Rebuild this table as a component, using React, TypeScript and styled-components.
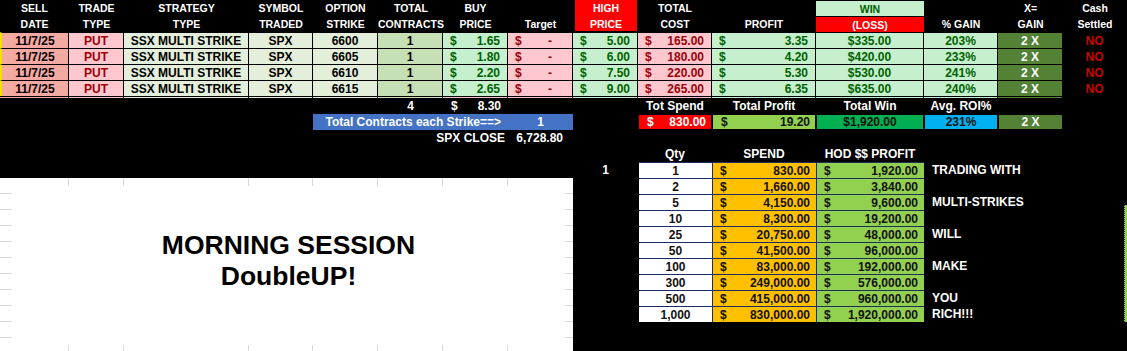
import React from 'react';
import styled, { createGlobalStyle } from 'styled-components';

const COLS = '69px 55px 125px 64px 65px 65px 65px 65px 65px 74px 104px 108px 74px 65px 64px';

const SALMON = '#F4A9A3';
const PINK = '#FFC7CE';
const DARKRED = '#9C0006';
const PALE = '#E3EFDB';
const OLIVE = '#C6DFB4';
const GREEN = '#C6EFCE';
const DKGREEN = '#006100';
const XGREEN = '#548235';
const LIME = '#92D050';
const NAVY = '#1F2D5C';

const GlobalStyle = createGlobalStyle`
  html, body { margin: 0; padding: 0; background: #000; }
  body { font-family: 'Liberation Sans', Arial, sans-serif; }
`;

const Sheet = styled.div`
  width: 1127px;
  height: 351px;
  background: #000;
  overflow: hidden;
  display: flex;
  flex-direction: column;
  font-family: 'Liberation Sans', Arial, sans-serif;
  font-weight: 700;
`;

const TradeGrid = styled.div`
  display: grid;
  grid-template-columns: ${COLS};
`;

const HeaderCol = styled.div<{ $fill?: string }>`
  display: grid;
  grid-template-rows: 16px 16px;
  height: ${(p) => (p.$fill ? '31px' : '32px')};
  margin: ${(p) => (p.$fill ? '0 1px 1px 2px' : '0')};
  background: ${(p) => p.$fill ?? 'transparent'};
`;

const HeadLine = styled.div<{ $bg?: string; $color?: string }>`
  display: flex;
  align-items: center;
  justify-content: center;
  font-size: 10.5px;
  color: ${(p) => p.$color ?? '#fff'};
  background: ${(p) => p.$bg ?? 'transparent'};
  margin: ${(p) => (p.$bg ? '1px 0 0 0' : '0')};
  white-space: nowrap;
`;

const Cell = styled.div<{ $bg: string; $color?: string; $split?: boolean; $edge?: boolean }>`
  box-sizing: border-box;
  height: 16px;
  border-top: 1px solid #000;
  border-right: 1px solid #000;
  border-left: ${(p) => (p.$edge ? '2px solid #F2E200' : '0')};
  background: ${(p) => p.$bg};
  color: ${(p) => p.$color ?? '#000'};
  display: flex;
  align-items: center;
  justify-content: ${(p) => (p.$split ? 'space-between' : 'center')};
  padding: ${(p) => (p.$split ? '0 7px 0 7px' : '0')};
  font-size: 12px;
  white-space: nowrap;
`;

const Dash = styled.span`
  margin-right: 13px;
`;

const Sliver = styled.div<{ $bg: string }>`
  height: 2px;
  box-sizing: border-box;
  border-top: 1px solid #000;
  border-right: 1px solid #000;
  background: ${(p) => p.$bg};
`;

const SummaryGrid = styled.div`
  flex: 1;
  display: grid;
  grid-template-columns: ${COLS};
  grid-template-rows: repeat(14, 16px) 1fr;
`;

type Place = { $col: string; $row: string };

const Text = styled.div<Place & { $align?: 'left' | 'center' | 'right'; $pad?: string; $color?: string }>`
  grid-column: ${(p) => p.$col};
  grid-row: ${(p) => p.$row};
  display: flex;
  align-items: center;
  justify-content: ${(p) =>
    p.$align === 'left' ? 'flex-start' : p.$align === 'right' ? 'flex-end' : 'center'};
  padding: ${(p) => p.$pad ?? '0'};
  color: ${(p) => p.$color ?? '#fff'};
  font-size: 12px;
  white-space: nowrap;
`;

const SplitText = styled(Text)`
  justify-content: space-between;
`;

const BlueBar = styled(Text)`
  background: #4472C4;
`;

const Box = styled.div<Place & { $bg: string; $color: string; $split?: boolean }>`
  grid-column: ${(p) => p.$col};
  grid-row: ${(p) => p.$row};
  box-sizing: border-box;
  border: 1px solid #000;
  background: ${(p) => p.$bg};
  color: ${(p) => p.$color};
  display: flex;
  align-items: center;
  justify-content: ${(p) => (p.$split ? 'space-between' : 'center')};
  padding: ${(p) => (p.$split ? '0 5px 0 8px' : '0')};
  font-size: 12px;
  white-space: nowrap;
`;

const TableCell = styled.div<Place & { $bg: string; $split?: boolean; $navyLeft?: boolean }>`
  grid-column: ${(p) => p.$col};
  grid-row: ${(p) => p.$row};
  box-sizing: border-box;
  border-top: 1px solid ${NAVY};
  border-left: 1px solid ${(p) => (p.$navyLeft ? NAVY : '#000')};
  background: ${(p) => p.$bg};
  color: #111;
  display: flex;
  align-items: center;
  justify-content: ${(p) => (p.$split ? 'space-between' : 'center')};
  padding: ${(p) => (p.$split ? '0 6px 0 7px' : '0')};
  font-size: 12px;
  white-space: nowrap;
`;

const gridX = [68, 123, 248, 312, 377, 442, 507];
const vLines = gridX.map(() => 'linear-gradient(#d9d9d9, #d9d9d9)').join(', ');
const vPos = gridX.map((x) => `${x}px 0`).join(', ');

const Panel = styled.div`
  grid-column: 1 / 9;
  grid-row: 6 / 16;
  display: flex;
  background-color: #fff;
  background-image: ${vLines}, repeating-linear-gradient(to bottom, transparent 0 15px, #d9d9d9 15px 16px);
  background-position: ${vPos}, 0 0;
  background-size: ${gridX.map(() => '1px 100%').join(', ')}, 100% 100%;
  background-repeat: no-repeat;
`;

const PanelInner = styled.div`
  flex: 1;
  margin: 8px 8px 6px 12px;
  background: #fff;
  display: flex;
  flex-direction: column;
  align-items: center;
  justify-content: center;
  padding-bottom: 10px;
`;

const Title = styled.div`
  font-size: 26.5px;
  line-height: 31px;
  color: #000;
  text-align: center;
  font-weight: 700;
`;

const EdgeStrip = styled.div`
  grid-column: 15;
  grid-row: 7 / 15;
  justify-self: end;
  width: 2px;
  margin-top: 11px;
  background: ${LIME};
  border-left: 1px dotted #333;
`;

const headers: { top: string; bottom: string; fill?: string; topBg?: string; topColor?: string; botBg?: string }[] = [
  { top: 'SELL', bottom: 'DATE' },
  { top: 'TRADE', bottom: 'TYPE' },
  { top: 'STRATEGY', bottom: 'TYPE' },
  { top: 'SYMBOL', bottom: 'TRADED' },
  { top: 'OPTION', bottom: 'STRIKE' },
  { top: 'TOTAL', bottom: 'CONTRACTS' },
  { top: 'BUY', bottom: 'PRICE' },
  { top: '', bottom: 'Target' },
  { top: 'HIGH', bottom: 'PRICE', fill: '#FF0000' },
  { top: 'TOTAL', bottom: 'COST' },
  { top: '', bottom: 'PROFIT' },
  { top: 'WIN', bottom: '(LOSS)', topBg: GREEN, topColor: DKGREEN, botBg: '#FF0000' },
  { top: '', bottom: '% GAIN' },
  { top: 'X=', bottom: 'GAIN' },
  { top: 'Cash', bottom: 'Settled' },
];

const trades = [
  { strike: '6600', buy: '1.65', high: '5.00', cost: '165.00', profit: '3.35', win: '$335.00', gain: '203%' },
  { strike: '6605', buy: '1.80', high: '6.00', cost: '180.00', profit: '4.20', win: '$420.00', gain: '233%' },
  { strike: '6610', buy: '2.20', high: '7.50', cost: '220.00', profit: '5.30', win: '$530.00', gain: '241%' },
  { strike: '6615', buy: '2.65', high: '9.00', cost: '265.00', profit: '6.35', win: '$635.00', gain: '240%' },
];

const sliver = [SALMON, PINK, PALE, PALE, PALE, OLIVE, PINK, PINK, GREEN, PINK, GREEN, GREEN, GREEN, XGREEN, '#000'];

const scale = [
  { qty: '1', spend: '830.00', hod: '1,920.00', label: 'TRADING WITH' },
  { qty: '2', spend: '1,660.00', hod: '3,840.00', label: '' },
  { qty: '5', spend: '4,150.00', hod: '9,600.00', label: 'MULTI-STRIKES' },
  { qty: '10', spend: '8,300.00', hod: '19,200.00', label: '' },
  { qty: '25', spend: '20,750.00', hod: '48,000.00', label: 'WILL' },
  { qty: '50', spend: '41,500.00', hod: '96,000.00', label: '' },
  { qty: '100', spend: '83,000.00', hod: '192,000.00', label: 'MAKE' },
  { qty: '300', spend: '249,000.00', hod: '576,000.00', label: '' },
  { qty: '500', spend: '415,000.00', hod: '960,000.00', label: 'YOU' },
  { qty: '1,000', spend: '830,000.00', hod: '1,920,000.00', label: 'RICH!!!' },
];

export default function App() {
  return (
    <>
      <GlobalStyle />
      <Sheet>
        <TradeGrid>
          {headers.map((h, i) => (
            <HeaderCol key={i} $fill={h.fill}>
              <HeadLine $bg={h.topBg} $color={h.topColor}>{h.top}</HeadLine>
              <HeadLine $bg={h.botBg}>{h.bottom}</HeadLine>
            </HeaderCol>
          ))}
          {trades.map((t) => (
            <React.Fragment key={t.strike}>
              <Cell $bg={SALMON} $edge>11/7/25</Cell>
              <Cell $bg={PINK} $color={DARKRED}>PUT</Cell>
              <Cell $bg={PALE}>SSX MULTI STRIKE</Cell>
              <Cell $bg={PALE}>SPX</Cell>
              <Cell $bg={PALE}>{t.strike}</Cell>
              <Cell $bg={OLIVE}>1</Cell>
              <Cell $bg={GREEN} $color={DKGREEN} $split>
                <span>$</span>
                <span>{t.buy}</span>
              </Cell>
              <Cell $bg={PINK} $color={DARKRED} $split>
                <span>$</span>
                <Dash>-</Dash>
              </Cell>
              <Cell $bg={GREEN} $color={DKGREEN} $split>
                <span>$</span>
                <span>{t.high}</span>
              </Cell>
              <Cell $bg={PINK} $color={DARKRED} $split>
                <span>$</span>
                <span>{t.cost}</span>
              </Cell>
              <Cell $bg={GREEN} $color={DKGREEN} $split>
                <span>$</span>
                <span>{t.profit}</span>
              </Cell>
              <Cell $bg={GREEN} $color={DKGREEN}>{t.win}</Cell>
              <Cell $bg={GREEN} $color={DKGREEN}>{t.gain}</Cell>
              <Cell $bg={XGREEN} $color="#fff">2 X</Cell>
              <Cell $bg="#000" $color="#D00000">NO</Cell>
            </React.Fragment>
          ))}
          {sliver.map((c, i) => (
            <Sliver key={i} $bg={c} />
          ))}
        </TradeGrid>

        <SummaryGrid>
          <Text $col="6" $row="1">4</Text>
          <SplitText $col="7" $row="1" $pad="0 7px 0 8px">
            <span>$</span>
            <span>8.30</span>
          </SplitText>
          <Text $col="10" $row="1">Tot Spend</Text>
          <Text $col="11" $row="1">Total Profit</Text>
          <Text $col="12" $row="1">Total Win</Text>
          <Text $col="13" $row="1">Avg. ROI%</Text>

          <BlueBar $col="5 / 8" $row="2" $align="right" $pad="0 7px 0 0">Total Contracts each Strike==&gt;</BlueBar>
          <BlueBar $col="8" $row="2">1</BlueBar>
          <Box $col="10" $row="2" $bg="#FF0000" $color="#fff" $split>
            <span>$</span>
            <span>830.00</span>
          </Box>
          <Box $col="11" $row="2" $bg={LIME} $color="#111" $split>
            <span>$</span>
            <span>19.20</span>
          </Box>
          <Box $col="12" $row="2" $bg="#00B050" $color="#111">$1,920.00</Box>
          <Box $col="13" $row="2" $bg="#00B0F0" $color="#111">231%</Box>
          <Box $col="14" $row="2" $bg={XGREEN} $color="#fff">2 X</Box>

          <Text $col="6 / 8" $row="3" $align="right" $pad="0 3px 0 0">SPX CLOSE</Text>
          <Text $col="8" $row="3" $align="right" $pad="0 10px 0 0">6,728.80</Text>

          <Text $col="10" $row="4">Qty</Text>
          <Text $col="11" $row="4">SPEND</Text>
          <Text $col="12" $row="4">HOD $$ PROFIT</Text>

          <Text $col="9" $row="5">1</Text>
          {scale.map((s, i) => {
            const row = String(5 + i);
            return (
              <React.Fragment key={s.qty}>
                <TableCell $col="10" $row={row} $bg="#fff">{s.qty}</TableCell>
                <TableCell $col="11" $row={row} $bg="#FFC000" $split $navyLeft>
                  <span>$</span>
                  <span>{s.spend}</span>
                </TableCell>
                <TableCell $col="12" $row={row} $bg={LIME} $split $navyLeft>
                  <span>$</span>
                  <span>{s.hod}</span>
                </TableCell>
                {s.label && (
                  <Text $col="13 / 16" $row={row} $align="left" $pad="0 0 0 8px">{s.label}</Text>
                )}
              </React.Fragment>
            );
          })}

          <Panel>
            <PanelInner>
              <Title>MORNING SESSION</Title>
              <Title>DoubleUP!</Title>
            </PanelInner>
          </Panel>
          <EdgeStrip />
        </SummaryGrid>
      </Sheet>
    </>
  );
}
